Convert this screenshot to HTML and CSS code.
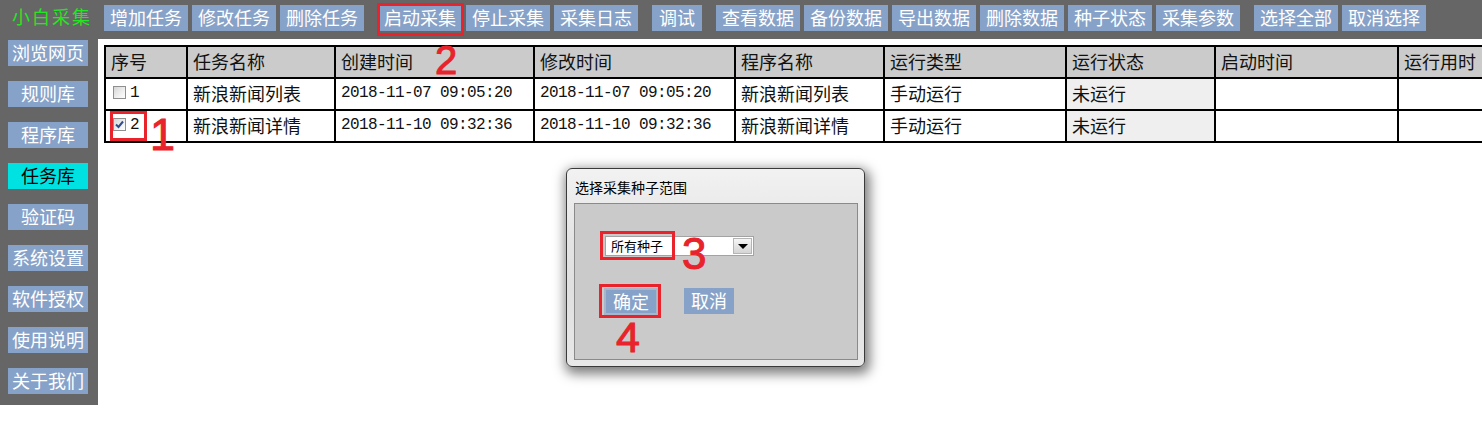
FILE: index.html
```html
<!DOCTYPE html>
<html lang="zh-CN">
<head>
<meta charset="utf-8">
<title>小白采集</title>
<link rel="stylesheet" href="styles.css">
</head>
<body>
<header class="topbar">
  <div class="brand">小白采集</div>
  <nav class="toolbar">
    <div class="group">
      <span class="btn">增加任务</span>
      <span class="btn">修改任务</span>
      <span class="btn">删除任务</span>
    </div>
    <div class="group">
      <span class="btn">启动采集</span>
      <span class="btn">停止采集</span>
      <span class="btn">采集日志</span>
    </div>
    <div class="group">
      <span class="btn btn-short">调试</span>
    </div>
    <div class="group">
      <span class="btn">查看数据</span>
      <span class="btn">备份数据</span>
      <span class="btn">导出数据</span>
      <span class="btn">删除数据</span>
      <span class="btn">种子状态</span>
      <span class="btn">采集参数</span>
    </div>
    <div class="group">
      <span class="btn">选择全部</span>
      <span class="btn">取消选择</span>
    </div>
  </nav>
</header>
<div class="main">
  <aside class="sidebar">
    <span class="side-btn">浏览网页</span>
    <span class="side-btn">规则库</span>
    <span class="side-btn">程序库</span>
    <span class="side-btn active">任务库</span>
    <span class="side-btn">验证码</span>
    <span class="side-btn">系统设置</span>
    <span class="side-btn">软件授权</span>
    <span class="side-btn">使用说明</span>
    <span class="side-btn">关于我们</span>
  </aside>
  <section class="content">
    <table class="grid">
      <thead>
        <tr>
          <th class="c1">序号</th>
          <th class="c2">任务名称</th>
          <th class="c3">创建时间</th>
          <th class="c4">修改时间</th>
          <th class="c5">程序名称</th>
          <th class="c6">运行类型</th>
          <th class="c7">运行状态</th>
          <th class="c8">启动时间</th>
          <th class="c9">运行用时</th>
        </tr>
      </thead>
      <tbody>
        <tr>
          <td><span class="idx"><span class="cb"></span><span class="mono">1</span></span></td>
          <td>新浪新闻列表</td>
          <td class="mono">2018-11-07 09:05:20</td>
          <td class="mono">2018-11-07 09:05:20</td>
          <td>新浪新闻列表</td>
          <td>手动运行</td>
          <td class="status">未运行</td>
          <td></td>
          <td></td>
        </tr>
        <tr>
          <td><span class="idx"><span class="cb checked"><svg viewBox="0 0 11 11" width="11" height="11"><path d="M2 5.5 L4.5 8 L9 2.5" fill="none" stroke="#2d4d8e" stroke-width="2"/></svg></span><span class="mono">2</span></span></td>
          <td>新浪新闻详情</td>
          <td class="mono">2018-11-10 09:32:36</td>
          <td class="mono">2018-11-10 09:32:36</td>
          <td>新浪新闻详情</td>
          <td>手动运行</td>
          <td class="status">未运行</td>
          <td></td>
          <td></td>
        </tr>
      </tbody>
    </table>
  </section>
</div>

<div class="dialog">
  <div class="dialog-title">选择采集种子范围</div>
  <div class="panel">
    <div class="select">
      <span class="select-text">所有种子</span>
      <span class="select-arrow"></span>
    </div>
    <div class="dlg-actions">
      <span class="dlg-btn primary">确定</span>
      <span class="dlg-btn">取消</span>
    </div>
  </div>
</div>

<div class="mark mark-start"></div>
<div class="mark mark-row"></div>
<div class="mark mark-select"></div>
<div class="mark mark-ok"></div>
<div class="num num-1">1</div>
<div class="num num-2">2</div>
<div class="num num-3">3</div>
<div class="num num-4">4</div>
</body>
</html>
```

FILE: styles.css
```css
* { box-sizing: border-box; }

html, body {
  margin: 0;
  padding: 0;
  overflow: hidden;
  background: #fff;
}

body {
  position: relative;
  width: 1482px;
  height: 436px;
  font-family: "Noto Sans CJK SC", "Noto Sans", sans-serif;
  color: #000;
}

/* top bar */
.topbar {
  height: 39px;
  background: #666666;
  display: flex;
  align-items: flex-start;
}

.brand {
  width: 104px;
  flex-shrink: 0;
  padding-left: 12px;
  height: 33px;
  line-height: 33px;
  font-size: 18px;
  letter-spacing: 2px;
  color: #22e622;
  white-space: nowrap;
}

.toolbar {
  display: flex;
  gap: 14px;
  padding-top: 5px;
}

.group {
  display: flex;
  gap: 4px;
}

.btn {
  display: block;
  width: 84px;
  height: 26px;
  line-height: 25px;
  background: #87a2c8;
  color: #fff;
  font-size: 18px;
  text-align: center;
  white-space: nowrap;
}

.btn-short { width: 50px; }

/* main */
.main {
  display: flex;
}

.sidebar {
  width: 98px;
  height: 366px;
  flex-shrink: 0;
  background: #666666;
  display: flex;
  flex-direction: column;
  gap: 15px;
  padding: 1px 0 0 8px;
}

.side-btn {
  display: block;
  width: 80px;
  height: 26px;
  line-height: 24px;
  background: #87a2c8;
  color: #fff;
  font-size: 18px;
  text-align: center;
  white-space: nowrap;
}

.side-btn.active {
  background: #00e2e2;
  color: #000;
}

.content {
  flex: 1;
  overflow: hidden;
  padding: 6px 0 0 6px;
}

/* table */
.grid {
  table-layout: fixed;
  width: 1445px;
  border-collapse: separate;
  border-spacing: 0;
  border-top: 2px solid #000;
  border-left: 2px solid #000;
  font-size: 18px;
}

.grid th,
.grid td {
  height: 32px;
  padding: 0 5px 3px;
  border-right: 2px solid #000;
  border-bottom: 2px solid #000;
  text-align: left;
  vertical-align: middle;
  font-weight: normal;
  white-space: nowrap;
  overflow: hidden;
  color: #111;
}

.grid th { background: #cbcbcb; }
.grid td { background: #fff; }
.grid td.status { background: #efefef; }

.c1 { width: 82px; }
.c2 { width: 148px; }
.c3 { width: 199px; }
.c4 { width: 201px; }
.c5 { width: 149px; }
.c6 { width: 182px; }
.c7 { width: 149px; }
.c8 { width: 183px; }
.c9 { width: 150px; }

.mono {
  font-family: "Liberation Mono", "Courier New", monospace;
  font-size: 16px;
  letter-spacing: -0.6px;
}

.idx {
  display: flex;
  align-items: center;
  gap: 4px;
  padding-left: 2px;
}

.cb {
  width: 13px;
  height: 13px;
  border: 1px solid #8e8f8f;
  background: linear-gradient(135deg, #d6d6d6 0%, #f4f4f4 70%, #fdfdfd 100%);
  display: flex;
  align-items: center;
  justify-content: center;
}

.cb svg { display: block; }

/* dialog */
.dialog {
  position: absolute;
  left: 566px;
  top: 168px;
  width: 299px;
  height: 199px;
  border: 1px solid #3a3a3a;
  border-radius: 6px;
  background: linear-gradient(180deg, #f2f2f2 0%, #e4e4e4 35%, #e0e0e0 60%, #e8e8e8 100%);
  box-shadow: 2px 4px 12px 3px rgba(0, 0, 0, 0.5);
  padding: 0 6px 6px 7px;
  display: flex;
  flex-direction: column;
}

.dialog-title {
  height: 34px;
  line-height: 36px;
  font-size: 14px;
  padding-left: 1px;
  color: #000;
}

.panel {
  flex: 1;
  border: 1px solid #8a8a8a;
  background: #cacaca;
  padding: 32px 0 0 30px;
}

.select {
  width: 149px;
  height: 20px;
  border: 1px solid #a3a3a3;
  background: #fff;
  display: flex;
  align-items: center;
  justify-content: space-between;
  font-size: 13px;
}

.select-text {
  padding-left: 5px;
  line-height: 18px;
}

.select-arrow {
  width: 19px;
  height: 16px;
  margin-right: 1px;
  border: 1px solid #b4b4b4;
  background: linear-gradient(180deg, #f6f6f6, #d4d4d4);
  display: flex;
  align-items: center;
  justify-content: center;
}

.select-arrow::after {
  content: "";
  border-left: 5px solid transparent;
  border-right: 5px solid transparent;
  border-top: 5px solid #000;
}

.dlg-actions {
  display: flex;
  align-items: flex-start;
  gap: 26px;
  margin-top: 32px;
  margin-left: -1px;
}

.dlg-btn {
  display: block;
  width: 50px;
  height: 26px;
  line-height: 24px;
  background: #87a2c8;
  color: #fff;
  font-size: 18px;
  text-align: center;
}

.dlg-btn.primary {
  width: 54px;
  height: 27px;
  line-height: 22px;
  border: 2px solid #aab6c8;
}

/* annotations */
.mark {
  position: absolute;
  border: 3px solid #e8232b;
}

.mark-start { left: 377px; top: 3px; width: 87px; height: 33px; }
.mark-row { left: 110px; top: 111px; width: 37px; height: 30px; }
.mark-select { left: 600px; top: 231px; width: 75px; height: 29px; }
.mark-ok { left: 599px; top: 284px; width: 62px; height: 34px; }

.num {
  position: absolute;
  font-family: "Liberation Sans", Arial, sans-serif;
  color: #e8232b;
  line-height: 1;
  -webkit-text-stroke: 1px #e8232b;
}

.num-1 { left: 150px; top: 112px; font-size: 45px; }
.num-2 { left: 435px; top: 40px; font-size: 40px; }
.num-3 { left: 682px; top: 232px; font-size: 44px; }
.num-4 { left: 616px; top: 316px; font-size: 43px; }
```
